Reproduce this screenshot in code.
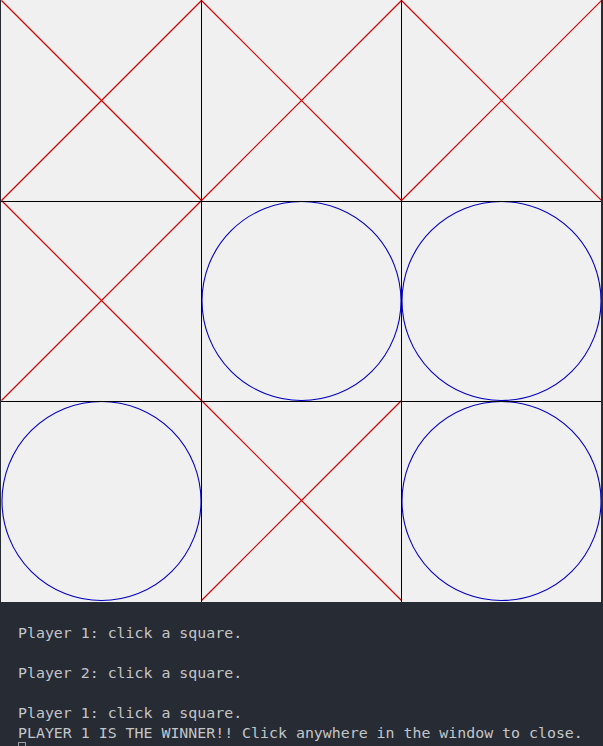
const board = [
  ["X", "X", "X"],
  ["X", "O", "O"],
  ["O", "X", "O"],
]

const lines = [
  "Player 1: click a square.",
  "",
  "Player 2: click a square.",
  "",
  "Player 1: click a square.",
  "PLAYER 1 IS THE WINNER!! Click anywhere in the window to close.",
]

function Board() {
  return (
    <svg width="600" height="602" viewBox="0 0 600 602" className="block">
      <rect x="0" y="0" width="600" height="602" fill="#f0f0f0" />
      {board.map((row, r) =>
        row.map((cell, c) => {
          const x = c * 200
          const y = r * 200
          if (cell === "X") {
            return (
              <path
                key={`${r}-${c}`}
                d={`M${x + 0.5} ${y + 0.5}L${x + 200.5} ${y + 200.5}M${x + 200.5} ${y + 0.5}L${x + 0.5} ${y + 200.5}`}
                stroke="#d40000"
                strokeWidth="1.2"
                fill="none"
              />
            )
          }
          return (
            <circle
              key={`${r}-${c}`}
              cx={x + 100.5}
              cy={y + 101}
              r="99.5"
              stroke="#0000c0"
              strokeWidth="1.1"
              fill="none"
            />
          )
        })
      )}
      <g stroke="#000" strokeWidth="1" shapeRendering="crispEdges">
        <line x1="200.5" y1="0" x2="200.5" y2="602" />
        <line x1="400.5" y1="0" x2="400.5" y2="602" />
        <line x1="0" y1="201.5" x2="600" y2="201.5" />
        <line x1="0" y1="401.5" x2="600" y2="401.5" />
      </g>
    </svg>
  )
}

export default function App() {
  return (
    <div className="h-[746px] w-[603px] overflow-hidden bg-[#272b33]">
      <div className="pl-px">
        <Board />
      </div>
      <div className="pl-[18px] pt-[21px] font-['DejaVu_Sans_Mono',monospace] text-[14.9px] leading-[20px] text-[#c3c6c9]">
        {lines.map((line, i) => (
          <div key={i} className="h-[20px] whitespace-pre">
            {line}
          </div>
        ))}
        <div className="h-[20px]">
          <span className="mt-[-1px] inline-block h-[12px] w-[8px] border border-[#9a9da2] align-top" />
        </div>
      </div>
    </div>
  )
}
